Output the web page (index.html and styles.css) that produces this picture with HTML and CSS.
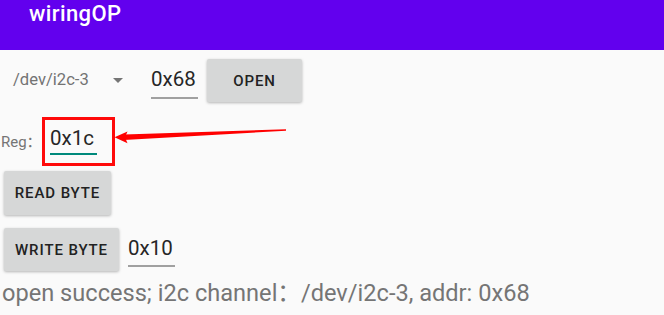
FILE: index.html
```html
<!DOCTYPE html>
<html lang="en">
<head>
<meta charset="utf-8">
<title>wiringOP</title>
<link rel="stylesheet" href="styles.css">
</head>
<body>
<div class="app">
  <header class="appbar"><span class="title">wiringOP</span></header>
  <main class="content">
    <div class="row row-open">
      <div class="spinner">
        <span class="spinner-text">/dev/i2c-3</span>
        <span class="spinner-arrow"></span>
      </div>
      <span class="edit edit-addr">0x68</span>
      <button class="btn btn-open">OPEN</button>
    </div>
    <div class="row row-reg">
      <span class="label">Reg：</span>
      <div class="highlight">
        <span class="edit edit-reg">0x1c</span>
      </div>
    </div>
    <div class="row row-read">
      <button class="btn btn-read">READ BYTE</button>
    </div>
    <div class="row row-write">
      <button class="btn btn-write">WRITE BYTE</button>
      <span class="edit edit-val">0x10</span>
    </div>
    <p class="status">open success; i2c channel：/dev/i2c-3, addr: 0x68</p>
  </main>
  <svg class="annotation" width="664" height="315" viewBox="0 0 664 315" aria-hidden="true">
    <polygon points="124,134.5 286,129.3 286,130.8 124,140" fill="#ff0000"/>
    <polygon points="114.5,137.3 127.5,131.5 125,137.3 127.5,143.3" fill="#ff0000"/>
  </svg>
</div>
</body>
</html>
```

FILE: styles.css
```css
* { box-sizing: border-box; }

html, body {
  margin: 0;
  padding: 0;
  background: #fafafa;
  overflow: hidden;
}

body {
  font-family: Roboto, "Noto Sans CJK SC", sans-serif;
  color: #212121;
}

.app {
  position: relative;
  width: 664px;
  height: 315px;
}

.appbar {
  height: 50px;
  background: #6200ee;
  padding: 1px 0 0 29px;
}

.title {
  display: block;
  color: #ffffff;
  font-size: 22px;
  font-weight: 500;
  letter-spacing: 0.4px;
  line-height: 25px;
}

.content {
  display: flex;
  flex-direction: column;
}

.row {
  display: flex;
  align-items: flex-start;
}

.row-open {
  margin-top: 9px;
  height: 43px;
}

.spinner {
  display: flex;
  align-items: flex-start;
  justify-content: space-between;
  width: 123px;
  padding-left: 13px;
}

.spinner-text {
  margin-top: 11px;
  font-size: 16.6px;
  line-height: 19px;
  color: #737373;
}

.spinner-arrow {
  margin-top: 19px;
  width: 0;
  height: 0;
  border-left: 5px solid transparent;
  border-right: 5px solid transparent;
  border-top: 5px solid #757575;
}

.edit {
  display: block;
  font-size: 20.5px;
  line-height: 23px;
  color: #262626;
  border-bottom: 2px solid #a0a0a0;
}

.edit-addr {
  margin: 9px 0 0 28px;
  width: 47px;
  padding-bottom: 6px;
}

.btn {
  display: block;
  border: 0;
  border-radius: 2px;
  background: #d6d7d7;
  box-shadow: 0 1px 3px rgba(0, 0, 0, 0.28);
  font-family: Roboto, sans-serif;
  font-size: 15px;
  font-weight: 500;
  letter-spacing: 0.9px;
  color: #222222;
  padding: 0;
  text-align: center;
}

.btn-open {
  margin-left: 9px;
  width: 95px;
  height: 43px;
}

.row-reg {
  margin-top: 15px;
  height: 49px;
}

.label {
  margin: 16px 0 0 1px;
  width: 41px;
  font-size: 15px;
  line-height: 18px;
  color: #757575;
}

.highlight {
  width: 73px;
  height: 49px;
  border: 3px solid #ff0a0a;
  padding: 7px 0 0 5px;
}

.edit-reg {
  width: 47px;
  padding-bottom: 3px;
  border-bottom-color: #00897b;
}

.row-read {
  margin-top: 5px;
}

.btn-read {
  margin-left: 4px;
  width: 107px;
  height: 44px;
}

.row-write {
  margin-top: 13px;
}

.btn-write {
  margin-left: 4px;
  width: 115px;
  height: 43px;
}

.edit-val {
  margin: 9px 0 0 9px;
  width: 47px;
  padding-bottom: 5px;
}

.status {
  margin: 9px 0 0 2px;
  font-size: 23.6px;
  line-height: 27px;
  color: #757575;
  white-space: nowrap;
}

.annotation {
  position: absolute;
  left: 0;
  top: 0;
  pointer-events: none;
}
```
